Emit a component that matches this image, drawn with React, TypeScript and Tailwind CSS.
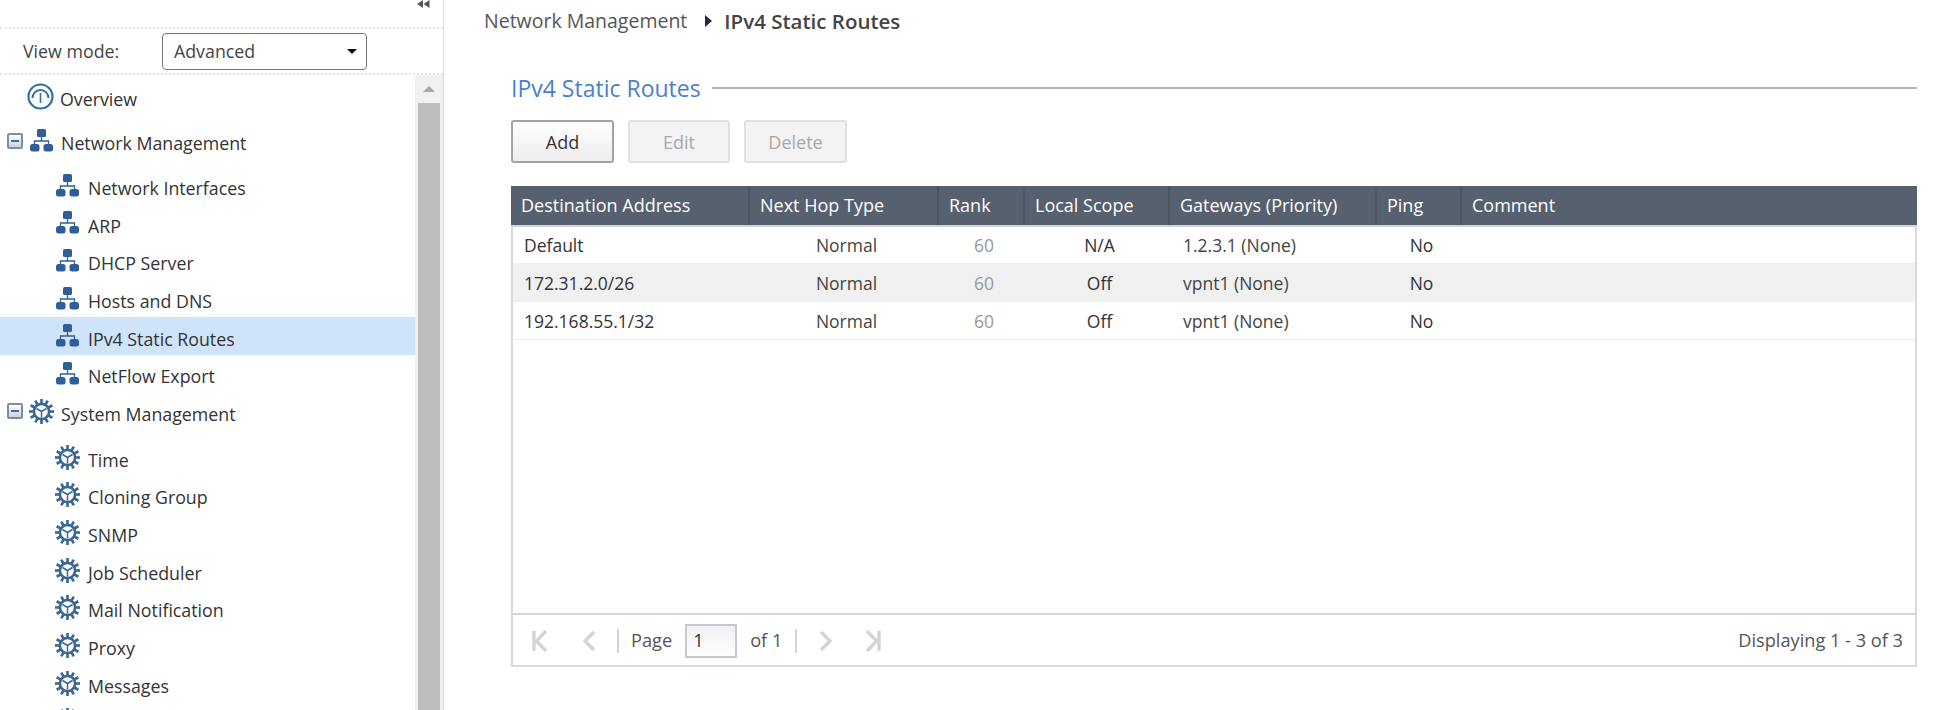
import React from 'react';

const FONT = "font-['Open_Sans',sans-serif]";

const NetworkIcon = () => (
  <svg width="23" height="23" viewBox="0 0 23 23" className="shrink-0">
    <rect x="7" y="0" width="9" height="8" rx="1.5" fill="#2f5f96" />
    <path d="M11.5 8v4M4.5 15v-3h14v3" fill="none" stroke="#2f5f96" strokeWidth="1.3" />
    <rect x="0" y="15" width="9.5" height="7.5" rx="2.5" fill="#2f5f96" />
    <rect x="13.5" y="15" width="9.5" height="7.5" rx="2.5" fill="#2f5f96" />
  </svg>
);

const GearIcon = () => (
  <svg width="25" height="25" viewBox="0 0 25 25" className="shrink-0">
    {[0, 30, 60, 90, 120, 150, 180, 210, 240, 270, 300, 330].map((a) => (
      <rect key={a} x="11.2" y="0" width="2.6" height="5" fill="#3a6796" transform={`rotate(${a} 12.5 12.5)`} />
    ))}
    <circle cx="12.5" cy="12.5" r="7.6" fill="none" stroke="#3a6796" strokeWidth="2.6" />
    <path d="M12.5 12.5v6M12.5 12.5l-5-3M12.5 12.5l5-3" stroke="#3a6796" strokeWidth="1.5" />
  </svg>
);

const GaugeIcon = () => (
  <svg width="27" height="27" viewBox="0 0 27 27" className="shrink-0">
    <circle cx="13.5" cy="13.5" r="12" fill="none" stroke="#34709f" strokeWidth="2.2" />
    <path d="M5.500 15a8 8 0 0 1 16 0" fill="none" stroke="#34709f" strokeWidth="2" />
    <path d="M13.500 10v10" stroke="#34709f" strokeWidth="1.6" />
  </svg>
);

const MinusBox = () => (
  <span className="flex h-[16px] w-[16px] shrink-0 items-center justify-center rounded-[2px] border-2 border-[#7d8ea3] bg-gradient-to-b from-white to-[#c9d2dc]">
    <span className="h-[2px] w-[8px] bg-[#55677c]" />
  </span>
);

const GroupRow = ({ icon, label }: { icon: React.ReactNode; label: string }) => (
  <div className="flex h-[37.7px] items-center pl-[7px]">
    <MinusBox />
    <span className="ml-[6px] flex w-[25px] justify-center">{icon}</span>
    <span className="ml-[7px] pt-[6px] text-[#333]">{label}</span>
  </div>
);

const ChildRow = ({ icon, label, selected }: { icon: React.ReactNode; label: string; selected?: boolean }) => (
  <div className={`flex h-[37.7px] items-center pl-[55px] ${selected ? 'bg-[#cfe4fb]' : ''}`}>
    <span className="flex w-[25px] justify-center">{icon}</span>
    {label && <span className="ml-[8px] pt-[6px] text-[#333]">{label}</span>}
  </div>
);

const networkItems = ['Network Interfaces', 'ARP', 'DHCP Server', 'Hosts and DNS', 'IPv4 Static Routes', 'NetFlow Export'];
const systemItems = ['Time', 'Cloning Group', 'SNMP', 'Job Scheduler', 'Mail Notification', 'Proxy', 'Messages', ''];

const Sidebar = () => (
  <aside className="flex h-[710px] w-[444px] shrink-0 flex-col overflow-hidden border-r border-[#dcdcdc] bg-white text-[17.8px]">
    <div className="flex h-[27px] justify-end pr-[13px]">
      <svg width="14" height="9" viewBox="0 0 14 9">
        <path d="M7 0v8L1 4zM13.500 0v8l-6-4z" fill="#555" />
      </svg>
    </div>
    <div className="flex h-[48px] items-center border-y-2 border-dotted border-[#e6e6e6] pl-[23px]">
      <span className="w-[139px] text-[#444]">View mode:</span>
      <div className="flex h-[37px] w-[205px] items-center justify-between rounded-[4px] border border-[#777] pl-[11px] pr-[9px] text-[#444]">
        Advanced
        <span className="h-0 w-0 border-x-[5px] border-t-[5px] border-x-transparent border-t-[#111]" />
      </div>
    </div>
    <div className="flex min-h-0 flex-1">
      <div className="min-w-0 flex-1 pt-[3px]">
        <div className="mb-[6px] flex h-[37.7px] items-center pl-[27px]">
          <GaugeIcon />
          <span className="ml-[6px] pt-[4px] text-[#333]">Overview</span>
        </div>
        <GroupRow icon={<NetworkIcon />} label="Network Management" />
        <div className="mt-[7px]">
          {networkItems.map((item) => (
            <ChildRow key={item} icon={<NetworkIcon />} label={item} selected={item === 'IPv4 Static Routes'} />
          ))}
        </div>
        <GroupRow icon={<GearIcon />} label="System Management" />
        <div className="mt-[8px]">
          {systemItems.map((item) => (
            <ChildRow key={item} icon={<GearIcon />} label={item} />
          ))}
        </div>
      </div>
      <div className="flex w-[28px] shrink-0 flex-col bg-[#f1f1f1]">
        <div className="flex h-[28px] items-center justify-center">
          <span className="h-0 w-0 border-x-[6px] border-b-[6px] border-x-transparent border-b-[#a8a8a8]" />
        </div>
        <div className="ml-[3px] w-[22px] flex-1 bg-[#bebebe]" />
      </div>
    </div>
  </aside>
);

const columns = [
  { title: 'Destination Address', width: 'w-[239px]', cell: 'text-left pl-[11px] text-[#333]' },
  { title: 'Next Hop Type', width: 'w-[189px]', cell: 'text-center text-[#444]' },
  { title: 'Rank', width: 'w-[86px]', cell: 'text-center text-[#999]' },
  { title: 'Local Scope', width: 'w-[145px]', cell: 'text-center text-[#333]' },
  { title: 'Gateways (Priority)', width: 'w-[207px]', cell: 'text-left pl-[11px] text-[#444]' },
  { title: 'Ping', width: 'w-[85px]', cell: 'text-center text-[#333]' },
  { title: 'Comment', width: 'flex-1', cell: '' },
];

const rows = [
  ['Default', 'Normal', '60', 'N/A', '1.2.3.1 (None)', 'No', ''],
  ['172.31.2.0/26', 'Normal', '60', 'Off', 'vpnt1 (None)', 'No', ''],
  ['192.168.55.1/32', 'Normal', '60', 'Off', 'vpnt1 (None)', 'No', ''],
];

const PagerIcon = ({ d }: { d: string }) => (
  <svg width="18" height="22" viewBox="0 0 18 22">
    <path d={d} fill="none" stroke="#d4d4d4" strokeWidth="3.4" />
  </svg>
);

const Pager = () => (
  <div className="flex h-[52px] items-center border-t-2 border-[#d6d6d6] pl-[18px] pr-[12px] pt-[2px] text-[18.200px]">
    <PagerIcon d="M3 1v20M15 1L5.500 11L15 21" />
    <span className="ml-[31px]"><PagerIcon d="M14 2L5 11L14 20" /></span>
    <span className="ml-[19px] h-[24px] w-[2px] bg-[#d4d4d4]" />
    <span className="ml-[12px] text-[#555]">Page</span>
    <div className="ml-[13px] flex h-[34px] w-[52px] items-center border-2 border-[#c3c8d8] bg-gradient-to-b from-[#f0f0f0] to-white pl-[6px] text-[#333]">1</div>
    <span className="ml-[13px] text-[#555]">of 1</span>
    <span className="ml-[13px] h-[24px] w-[2px] bg-[#d4d4d4]" />
    <span className="ml-[20px]"><PagerIcon d="M4 2L13 11L4 20" /></span>
    <span className="ml-[29px]"><PagerIcon d="M15 1v20M3 1L12.500 11L3 21" /></span>
    <span className="ml-auto text-[#555]">Displaying 1 - 3 of 3</span>
  </div>
);

const GridPanel = () => (
  <div className="flex h-[481px] flex-col border-x-2 border-b-2 border-[#dadada] text-[17.500px]">
    <div className="-mx-[2px] flex h-[39px] bg-[#56606f] shadow-[0_2px_0_#d4d4d4]">
      {columns.map((col) => (
        <div key={col.title} className={`${col.width} flex items-center border-r-2 border-[#4a5463] pl-[10px] text-[18px] text-white last:border-r-0`}>
          {col.title}
        </div>
      ))}
    </div>
    <div className="min-h-0 flex-1 pt-[1px]">
      {rows.map((row, i) => (
        <div key={row[0]} className={`flex h-[38px] border-b border-[#eeeeee] ${i === 1 ? 'bg-[#f0f0f0]' : ''}`}>
          {row.map((cell, j) => (
            <div key={j} className={`${columns[j].width} ${columns[j].cell} leading-[38px]`}>
              {cell}
            </div>
          ))}
        </div>
      ))}
    </div>
    <Pager />
  </div>
);

export default function App() {
  return (
    <div className={`flex h-[710px] w-[1960px] overflow-hidden bg-white ${FONT}`}>
      <Sidebar />
      <main className="min-w-0 flex-1">
        <div className="flex h-[42px] items-center pl-[40px] text-[19.500px] text-[#555]">
          Network Management
          <span className="ml-[18px] mr-[12px] h-0 w-0 border-y-[6px] border-l-[7px] border-y-transparent border-l-[#1f2a44]" />
          <span className="text-[20.500px] font-semibold text-[#444]">IPv4 Static Routes</span>
        </div>
        <div className="pl-[67px] pr-[43px]">
          <div className="mt-[30px] flex h-[32px] items-center">
            <span className="text-[23px] text-[#4a7fc9]">IPv4 Static Routes</span>
            <span className="ml-[11px] h-[2px] flex-1 bg-[#b4b4b4]" />
          </div>
          <div className="mt-[16px] flex gap-[14px] text-[18px]">
            <button className="h-[43px] w-[103px] rounded-[3px] border-2 border-[#a3a3a3] bg-gradient-to-b from-white to-[#ededed] pt-[1px] text-[#333]">Add</button>
            <button className="h-[43px] w-[102px] rounded-[3px] border-2 border-[#e0e0e0] bg-[#f3f3f3] pt-[1px] text-[#a8a8a8]">Edit</button>
            <button className="h-[43px] w-[103px] rounded-[3px] border-2 border-[#e0e0e0] bg-[#f3f3f3] pt-[1px] text-[#a8a8a8]">Delete</button>
          </div>
          <div className="mt-[23px]">
            <GridPanel />
          </div>
        </div>
      </main>
    </div>
  );
}
